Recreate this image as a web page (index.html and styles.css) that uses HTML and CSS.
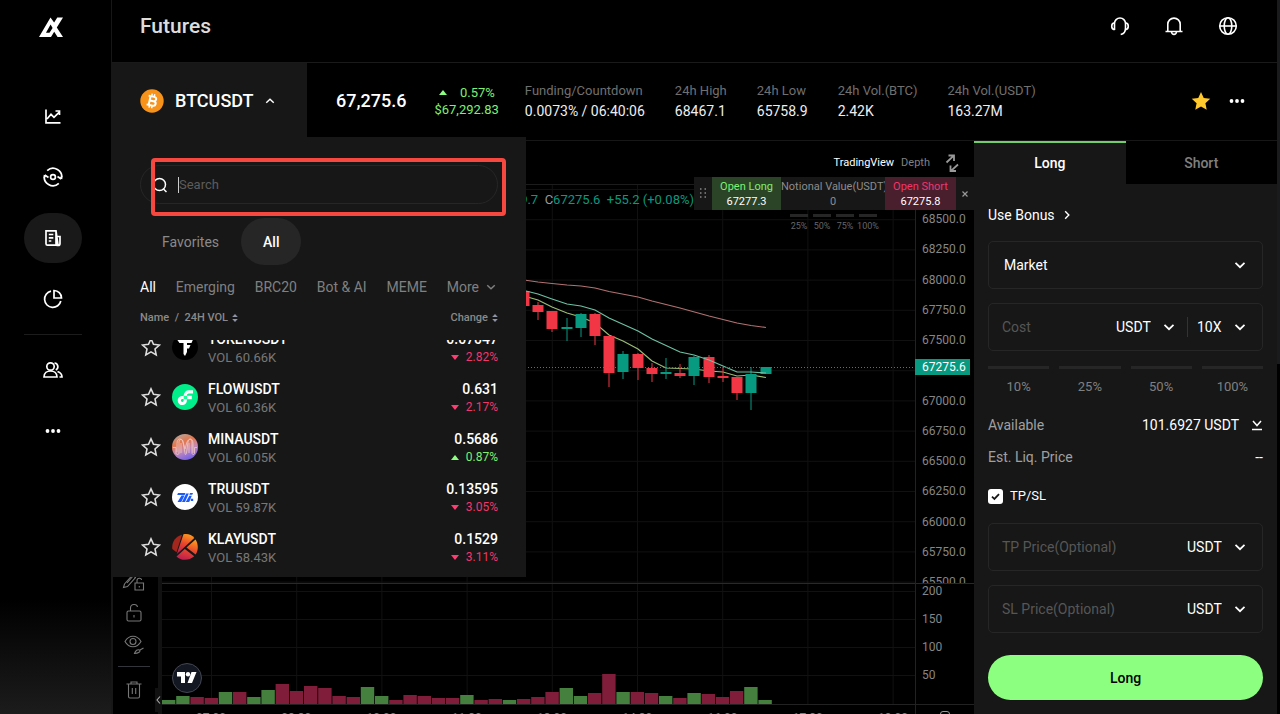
FILE: index.html
```html
<!DOCTYPE html>
<html lang="en">
<head>
    <meta charset="UTF-8">
    <meta name="viewport" content="width=device-width, initial-scale=1.0">
    <title>Futures</title>
    <link rel="stylesheet" href="styles.css">
</head>
<body>
    <svg class="defs" width="0" height="0">
        <symbol id="chevron" viewBox="0 0 12 12"><path d="M1.500 3.800L6 8.200l4.500-4.400" fill="none" stroke="currentColor" stroke-width="1.700"/></symbol>
        <symbol id="star" viewBox="0 0 20 20"><path d="M10 1.800l2.500 5.500 5.900.7-4.400 4 1.200 5.900-5.200-3-5.200 3L6 12 1.600 8l5.900-.7z"/></symbol>
        <symbol id="sort" viewBox="0 0 6 8"><path d="M3 0l2.800 3H.2zM3 8L.2 5h5.600z" fill="#8e93a6"/></symbol>
        <symbol id="dots" viewBox="0 0 16 16"><circle cx="2.500" cy="8" r="1.900"/><circle cx="8" cy="8" r="1.900"/><circle cx="13.500" cy="8" r="1.900"/></symbol>
    </svg>

    <div class="app">
        <aside class="sidebar">
            <a class="logo" href="#" aria-label="Home">
                <svg width="26" height="22" viewBox="0 0 26 22"><path fill="#fff" fill-rule="evenodd" d="M1 21L12.500 1.500l3.600 5L19.300 1.500H25L18.800 11.400 25 21h-5.400l-3.400-5.300L13 21zM12.600 8.600L8 16.800h3.500l3.100-4.700z"/></svg>
            </a>
            <nav class="side-nav">
                <a href="#" aria-label="Markets"><svg viewBox="0 0 20 20"><path d="M3 3.500v13.300h14.500M4 13l4-4.700 3 3 5-5M12.500 5h4v4"/></svg></a>
                <a href="#" aria-label="Copy trading"><svg viewBox="0 0 20 20"><circle cx="10" cy="10" r="2.400"/><path d="M4.200 3.600A8.600 8.600 0 0 1 18.400 12M15.800 16.400A8.600 8.600 0 0 1 1.600 8M14.500 9.500l3 2 1.800-3M5.500 10.500l-3-2-1.800 3"/></svg></a>
                <a class="active" href="#" aria-label="Futures"><svg viewBox="0 0 20 20"><path d="M15 17.200H4.500a1.500 1.500 0 0 1-1.500-1.500V2.800h10zM13 8.500h4v7a1.700 1.700 0 0 1-4 0V3M5.800 6.500h4.500M5.800 9.800h4.500M5.800 13h2.500"/></svg></a>
                <a href="#" aria-label="Assets"><svg viewBox="0 0 20 20"><path d="M8 2.200A8.200 8.200 0 1 0 17.800 12"/><path d="M11 1.500A7.600 7.600 0 0 1 18.500 9H11z"/></svg></a>
                <hr>
                <a href="#" aria-label="Referral"><svg viewBox="0 0 20 20"><circle cx="7.500" cy="6.500" r="3.700"/><path d="M1 17c0-8 13-8 13 0zM11.500 3a3.700 3.700 0 0 1 1.300 7M14.500 11.500c3 1 4.500 2.800 4.500 5.500h-2.500"/></svg></a>
                <a href="#" aria-label="More"><svg class="solid" viewBox="0 0 16 16"><use href="#dots"/></svg></a>
            </nav>
        </aside>

        <main class="main">
            <header class="header">
                <h1>Futures</h1>
                <div class="header-actions">
                    <button type="button" aria-label="Support"><svg viewBox="0 0 20 20"><path d="M4.500 14V7.500a5.500 5.500 0 0 1 11 0V12c0 4-2 6-4.800 6.500M4.500 6.800C.8 7.300.8 13.200 4.500 13.700M15.500 6.800c3.700.5 3.700 6.400 0 6.900"/></svg></button>
                    <button type="button" aria-label="Notifications"><svg viewBox="0 0 20 20"><path d="M3.800 15.200V8.300a6.200 6.200 0 0 1 12.400 0v6.900M1.500 15.500h17M7.500 16c.4 3.200 4.600 3.200 5 0"/></svg></button>
                    <button type="button" aria-label="Language"><svg viewBox="0 0 20 20"><circle cx="10" cy="10" r="8.300"/><ellipse cx="10" cy="10" rx="3.800" ry="8.300"/><path d="M1.700 10h16.600"/></svg></button>
                </div>
            </header>

            <section class="ticker">
                <div class="pair">
                    <button class="pair-btn" type="button">
                        <svg width="24" height="24" viewBox="0 0 24 24"><circle cx="12" cy="12" r="11.700" fill="#f7931a"/><g fill="none" stroke="#fff" stroke-width="2" transform="rotate(13 12 12)"><path d="M7.500 7.500h5.700c3.300 0 3.300 4.400 0 4.400H9.500M9.600 7v10M7.500 16.500h6c3.600 0 3.600-4.600 0-4.600"/><path d="M10.600 4.800v2.500M13.200 4.800v2.500M10.600 16.700v2.500M13.200 16.700v2.500" stroke-width="1.500"/></g></svg>
                        <span>BTCUSDT</span>
                        <svg class="up" width="10" height="10"><use href="#chevron"/></svg>
                    </button>

                    <div class="menu">
                        <label class="search">
                            <svg width="16" height="16" viewBox="0 0 16 16"><circle cx="7.500" cy="7.500" r="6"/><path d="M11.500 12l3 3"/></svg>
                            <i class="caret"></i>
                            <input type="text" placeholder="Search" aria-label="Search">
                        </label>
                        <div class="search-frame"></div>
                        <div class="scope">
                            <button type="button">Favorites</button>
                            <button class="active" type="button">All</button>
                        </div>
                        <div class="cats">
                            <button class="active" type="button">All</button>
                            <button type="button">Emerging</button>
                            <button type="button">BRC20</button>
                            <button type="button">Bot &amp; AI</button>
                            <button type="button">MEME</button>
                            <button type="button">More <svg width="10" height="10"><use href="#chevron"/></svg></button>
                        </div>
                        <div class="list-head">
                            <span>Name&nbsp; /&nbsp; 24H VOL <svg width="6" height="8"><use href="#sort"/></svg></span>
                            <span>Change <svg width="6" height="8"><use href="#sort"/></svg></span>
                        </div>
                        <ul class="coins">
                            <li>
                                <svg class="fav"><use href="#star"/></svg>
                                <svg class="coin" viewBox="0 0 26 26"><circle cx="13" cy="13" r="13" fill="#000"/><path d="M5 5.500h16l-1.500 3.500H15v2h3.500L17 14.500h-2V18l-2 4-1.500-2V9H7.500z" fill="#fff"/></svg>
                                <div class="coin-name"><b>TOKENUSDT</b><span>VOL 60.66K</span></div>
                                <div class="coin-price"><b>0.07047</b><span class="down">2.82%</span></div>
                            </li>
                            <li>
                                <svg class="fav"><use href="#star"/></svg>
                                <svg class="coin" viewBox="0 0 26 26"><circle cx="13" cy="13" r="13" fill="#00ef8b"/><path d="M15.200 11.800h4.600v3.500h-4.600zM11.700 11.800h3.500v3.500h-3.500z" fill="#fff"/><path d="M11.700 13.500H10a3 3 0 1 0 3.300 3v-5.200a3.600 3.600 0 0 1 3.600-3.500H21" fill="none" stroke="#fff" stroke-width="3.200"/><path d="M11.700 11.800h3.500v3.500h-3.500z" fill="#16ff99"/></svg>
                                <div class="coin-name"><b>FLOWUSDT</b><span>VOL 60.36K</span></div>
                                <div class="coin-price"><b>0.631</b><span class="down">2.17%</span></div>
                            </li>
                            <li>
                                <svg class="fav"><use href="#star"/></svg>
                                <svg class="coin" viewBox="0 0 26 26"><defs><linearGradient id="mina" x1=".3" y1="0" x2=".7" y2="1"><stop offset="0" stop-color="#b9a39a"/><stop offset=".3" stop-color="#e4774c"/><stop offset=".6" stop-color="#c58bb5"/><stop offset="1" stop-color="#6a5cf0"/></linearGradient></defs><circle cx="13" cy="13" r="13" fill="url(#mina)"/><path d="M1 13.500h3V19c0 2 3 2 3 0V8c0-3.500 4-3.500 4 0l2 11c0 2 1 2 1.500 0l1.500-11c.5-3.500 4-3.500 4 0v11c0 2 2.500 2 2.500 0v-5.500H25M5 18V9.500C5 4 9.500 3.500 11 8l2 7 2-7c2-4.500 6-4 6 1.500V19M9 9v10M17 9v10" fill="none" stroke="#f3c9c4" stroke-width=".8"/></svg>
                                <div class="coin-name"><b>MINAUSDT</b><span>VOL 60.05K</span></div>
                                <div class="coin-price"><b>0.5686</b><span class="rise">0.87%</span></div>
                            </li>
                            <li>
                                <svg class="fav"><use href="#star"/></svg>
                                <svg class="coin" viewBox="0 0 26 26"><circle cx="13" cy="13" r="13" fill="#fff"/><path d="M6 9h7.500l-.8 2H5.200zM9.500 11.500h3L9.300 18H5.500zM14.200 9.500h2.600L13 18h-3zM18 9h3l-.7 1.800h-3zM17.300 11.800h2.500L17.200 18h-3.400zM18.800 14.800h2.400V17h-2.400z" fill="#1a5aff"/></svg>
                                <div class="coin-name"><b>TRUUSDT</b><span>VOL 59.87K</span></div>
                                <div class="coin-price"><b>0.13595</b><span class="down">3.05%</span></div>
                            </li>
                            <li>
                                <svg class="fav"><use href="#star"/></svg>
                                <svg class="coin" viewBox="0 0 26 26"><defs><linearGradient id="klay" x1=".7" y1="0" x2=".4" y2="1"><stop offset="0" stop-color="#ff9a1f"/><stop offset=".5" stop-color="#e9482b"/><stop offset="1" stop-color="#c01f4f"/></linearGradient></defs><path d="M10 .8l-5.500 17.500L.3 15C-.5 8 3.500 2.500 10 .8z" fill="#a3271c"/><path d="M11.500.3C16-.5 20 1 22.300 4L8.800 16.500l-4 3.500z" fill="url(#klay)"/><path d="M23.500 5.500C26.500 10 26.600 16 23.600 20.500L14.500 13.500zM12.800 15l9.400 7.300C17 27 9 27 4.500 22.500z" fill="url(#klay)"/></svg>
                                <div class="coin-name"><b>KLAYUSDT</b><span>VOL 58.43K</span></div>
                                <div class="coin-price"><b>0.1529</b><span class="down">3.11%</span></div>
                            </li>
                        </ul>
                    </div>
                </div>

                <div class="last">67,275.6</div>
                <div class="change"><span class="rise">0.57%</span><span>$67,292.83</span></div>
                <dl class="stats">
                    <div><dt>Funding/Countdown</dt><dd>0.0073% / 06:40:06</dd></div>
                    <div><dt>24h High</dt><dd>68467.1</dd></div>
                    <div><dt>24h Low</dt><dd>65758.9</dd></div>
                    <div><dt>24h Vol.(BTC)</dt><dd>2.42K</dd></div>
                    <div><dt>24h Vol.(USDT)</dt><dd>163.27M</dd></div>
                </dl>
                <div class="ticker-actions">
                    <button type="button" aria-label="Favorite"><svg width="22" height="22" fill="#ffc82c"><use href="#star"/></svg></button>
                    <button type="button" aria-label="More"><svg width="16" height="16" fill="#fff"><use href="#dots"/></svg></button>
                </div>
            </section>

            <div class="work">
                <section class="chart">
                    <div class="chart-bar">
                        <button class="active" type="button">TradingView</button>
                        <button type="button">Depth</button>
                        <button class="expand" type="button" aria-label="Full screen"><svg width="18" height="18" viewBox="0 0 18 18"><path d="M3.500 8.500L10.500 1.800M5.500 1.500H11V7M15 10.500L8 16.800M7.500 11.500V17H13"/></svg></button>
                    </div>
                    <div class="chart-body">
                        <div class="tools">
                            <button type="button" aria-label="Lock drawings"><svg viewBox="0 0 24 24"><path d="M2.500 14l8-9 3 2.500-8 9-4 1zM5 13l7-8M13 13h8.500v7H13zM15 13v-2.500c0-3 4.500-3 4.500-.5M17.300 16v1.500"/></svg></button>
                            <button type="button" aria-label="Unlock"><svg viewBox="0 0 24 24"><rect x="5" y="10" width="14" height="10" rx="1.500"/><path d="M8.500 10V7c0-4.500 6.500-4.500 7-1M12 14v2.500"/></svg></button>
                            <button type="button" aria-label="Hide drawings"><svg viewBox="0 0 24 24"><path d="M3 9.500c4-7 12-7 16 0-4 7-12 7-16 0z"/><circle cx="11" cy="9.500" r="3"/><path d="M12.500 21.500c1-3 3-4.500 5-3.500 1.500 1.500-1 3.500-5 3.500zM18 18l3.500-2"/></svg></button>
                            <hr>
                            <button type="button" aria-label="Remove drawings"><svg viewBox="0 0 24 24"><path d="M4.500 6h15M6.500 6v12.500a1.500 1.500 0 0 0 1.500 1.500h8a1.500 1.500 0 0 0 1.500-1.500V6M9 6V4h6v2M10.300 10v6M13.700 10v6"/></svg></button>
                            <button class="collapse" type="button" aria-label="Hide toolbar"><svg viewBox="0 0 6 10"><path d="M5 1.500L2 5l3 3.500"/></svg></button>
                        </div>
                        <div class="plot">
                            <svg id="plot" viewBox="162 184 753 520" preserveAspectRatio="none"></svg>
                            <div class="times"><span>07:00</span><span>08:30</span><span>10:00</span><span>11:30</span><span>13:00</span><span>14:30</span><span>16:00</span><span>17:30</span><span>19:00</span></div>
                            <a class="tv" href="#" aria-label="Chart provider"><svg width="20" height="12" viewBox="0 0 20 12"><path fill="#fff" d="M0 0h8v11H4V4.500H0zM14.500 0H19.500L15 11h-4.500z"/><circle cx="11" cy="2.200" r="2.200" fill="#fff"/></svg></a>
                        </div>
                        <div class="axis">
                            <div class="prices">
                                <div class="price-list">
                                    <span>68500.0</span><span>68250.0</span><span>68000.0</span><span>67750.0</span><span>67500.0</span><span>67250.0</span><span>67000.0</span><span>66750.0</span><span>66500.0</span><span>66250.0</span><span>66000.0</span><span>65750.0</span><span>65500.0</span>
                                </div>
                            </div>
                            <div class="volumes"><span>200</span><span>150</span><span>100</span><span>50</span></div>
                            <div class="axis-foot"><i></i></div>
                            <div class="price-tag">67275.6</div>
                        </div>
                    </div>

                    <div class="legend">9.7 &nbsp;<span>C</span>67275.6 &nbsp;+55.2 (+0.08%)</div>

                    <div class="quick">
                        <div class="quick-row">
                            <svg class="grip" viewBox="0 0 8 10"><path d="M1 1h1.500M5.500 1H7M1 5h1.500M5.500 5H7M1 9h1.500M5.500 9H7"/></svg>
                            <button class="open-long" type="button">Open Long<b>67277.3</b></button>
                            <label class="notional">Notional Value(USDT)<input type="text" value="0"></label>
                            <button class="open-short" type="button">Open Short<b>67275.8</b></button>
                            <button class="close" type="button" aria-label="Close"><svg viewBox="0 0 6 6"><path d="M.5.5l5 5M5.500.5l-5 5"/></svg></button>
                        </div>
                        <div class="quick-pct"><button type="button">25%</button><button type="button">50%</button><button type="button">75%</button><button type="button">100%</button></div>
                    </div>
                </section>

                <section class="order">
                    <div class="sides">
                        <button class="active" type="button">Long</button>
                        <button type="button">Short</button>
                    </div>
                    <form class="order-form">
                        <a class="bonus" href="#">Use Bonus <svg width="10" height="10"><use href="#chevron"/></svg></a>

                        <div class="field">
                            <div class="pick wide"><select aria-label="Order type"><option>Market</option></select><svg><use href="#chevron"/></svg></div>
                        </div>
                        <div class="field">
                            <input type="text" placeholder="Cost" aria-label="Cost">
                            <div class="pick"><select aria-label="Cost unit"><option>USDT</option></select><svg><use href="#chevron"/></svg></div>
                            <div class="pick lever"><select aria-label="Leverage"><option>10X</option></select><svg><use href="#chevron"/></svg></div>
                        </div>
                        <div class="percents"><button type="button">10%</button><button type="button">25%</button><button type="button">50%</button><button type="button">100%</button></div>

                        <div class="line"><span>Available</span><strong>101.6927 USDT <svg width="12" height="12" viewBox="0 0 12 12"><path d="M2 2l4 4.500L10 2M1 10.500h10"/></svg></strong></div>
                        <div class="line"><span>Est. Liq. Price</span><strong>--</strong></div>

                        <label class="tpsl"><input type="checkbox" checked><svg viewBox="0 0 10 10"><path d="M1.800 5.200l2.200 2 4.200-4.400"/></svg>TP/SL</label>

                        <div class="field">
                            <input type="text" placeholder="TP Price(Optional)" aria-label="TP Price">
                            <div class="pick"><select aria-label="TP unit"><option>USDT</option></select><svg><use href="#chevron"/></svg></div>
                        </div>
                        <div class="field">
                            <input type="text" placeholder="SL Price(Optional)" aria-label="SL Price">
                            <div class="pick"><select aria-label="SL unit"><option>USDT</option></select><svg><use href="#chevron"/></svg></div>
                        </div>
                        <button class="submit" type="submit">Long</button>
                    </form>
                </section>
            </div>
        </main>
        <div class="scrollbar"></div>
    </div>

    <script src="chart.js"></script>
</body>
</html>
```
FILE: styles.css
```css
* { margin: 0; padding: 0; box-sizing: border-box; }
body { background: #000; color: #fff; font: 14px/20px Roboto, sans-serif; }
button, input, select { font: inherit; color: inherit; background: none; border: none; outline: none; }
button, select { cursor: pointer; }
a { color: inherit; text-decoration: none; }
ul { list-style: none; }
svg { display: block; flex-shrink: 0; }
.defs { position: absolute; }

.app { display: flex; height: 100vh; overflow: hidden; }
.main { flex: 1; min-width: 0; display: flex; flex-direction: column; }
.scrollbar { width: 3px; height: 51%; background: #1a1b1c; }

/* sidebar */
.sidebar { width: 112px; flex-shrink: 0; border-right: 1px solid #171717; background: linear-gradient(#000 84%, #1c1c1c); }
.logo { display: flex; justify-content: center; padding: 16px 10px 0 0; height: 91px; }
.side-nav { display: flex; flex-direction: column; align-items: center; gap: 11px; padding-right: 6px; }
.side-nav a { width: 58px; height: 50px; border-radius: 25px; display: grid; place-items: center; }
.side-nav a.active { background: #191919; }
.side-nav svg { width: 20px; height: 20px; fill: none; stroke: #fff; stroke-width: 1.7; }
.side-nav svg.solid { width: 16px; height: 16px; fill: #fff; stroke: none; }
.side-nav hr { width: 58px; height: 1px; margin: -1px 0; border: none; background: #1c1c1c; }

/* header */
.header { height: 63px; flex-shrink: 0; display: flex; justify-content: space-between; align-items: center; padding: 0 39px 10px 28px; border-bottom: 1px solid #1a1a1a; }
h1 { font-size: 21px; font-weight: 500; color: #dcdcdc; }
.header-actions { display: flex; gap: 34px; }
.header-actions svg { width: 20px; height: 20px; fill: none; stroke: #fff; stroke-width: 1.6; }

/* ticker */
.ticker { height: 78px; flex-shrink: 0; display: flex; align-items: center; padding-bottom: 2px; border-bottom: 1px solid #171717; }
.pair { position: relative; align-self: flex-start; width: 195px; height: 74px; background: #171717; }
.pair-btn { display: flex; align-items: center; height: 76px; padding-left: 28px; gap: 11px; font-size: 18px; font-weight: 500; }
.up { transform: rotate(180deg); }
.last { margin-left: 29px; font-size: 18px; font-weight: 500; }
.change { margin-left: 28px; display: flex; flex-direction: column; align-items: flex-end; font-size: 13px; line-height: 17px; color: #7ef071; }
.change .rise { padding-right: 4px; gap: 13px; }
.stats { display: flex; gap: 30px; margin-left: 26px; }
.stats dt { font-size: 13px; color: #707070; }
.stats dd { color: #eee; }
.ticker-actions { margin-left: auto; display: flex; align-items: center; gap: 17px; padding-right: 32px; }

.rise, .down { display: flex; align-items: center; gap: 7px; }
.rise { color: #7ef071; }
.down { color: #f0366b; }
.rise::before, .down::before { content: ""; border: 4px solid transparent; border-top-width: 0; border-bottom: 5px solid #8dff80; }
.down::before { border-top: 5px solid #ff3d74; border-bottom-width: 0; }

/* pair menu */
.menu { position: absolute; z-index: 5; top: 100%; left: 0; width: 414px; height: 440px; padding: 28px 28px 0; display: flex; flex-direction: column; background: #171717; }
.search { display: flex; align-items: center; height: 39px; padding-left: 11px; border: 1px solid #262626; border-radius: 20px; }
.search svg { fill: none; stroke: #fff; stroke-width: 1.5; }
.search .caret { width: 1px; height: 16px; margin-left: 10px; background: #ccc; }
.search input { flex: 1; font-size: 13px; }
.search input::placeholder { color: #5c5c5c; opacity: 1; }
.search-frame { position: absolute; top: 21px; left: 39px; width: 355px; height: 58px; border: 4px solid #f7483f; border-radius: 4px; }
.scope { display: flex; margin-top: 14px; }
.scope button { height: 47px; padding: 0 22px; border-radius: 24px; color: #8a8a8a; }
.scope .active { background: #262626; color: #fff; font-weight: 500; }
.cats { display: flex; justify-content: space-between; margin-top: 12px; padding-right: 2px; }
.cats button { display: flex; align-items: center; gap: 7px; color: #808080; }
.cats .active { color: #fff; }
.list-head { display: flex; justify-content: space-between; margin-top: 11px; font-size: 11px; font-weight: 500; color: #8a8a8a; }
.list-head span { display: flex; align-items: center; gap: 4px; }
.coins { flex: 1; min-height: 0; margin-top: 12px; padding-bottom: 5px; display: flex; flex-direction: column; justify-content: flex-end; overflow: hidden; }
.coins li { flex-shrink: 0; display: flex; align-items: center; height: 50px; padding-left: 1px; }
.fav { width: 20px; height: 20px; fill: none; stroke: #ddd; stroke-width: 1.6; }
.coin { width: 26px; height: 26px; margin: 0 10px 0 11px; }
.coins b { display: block; font-weight: 500; }
.coins span { line-height: 17px; }
.coin-name span { display: block; color: #787878; font-size: 13px; }
.coin-price { margin-left: auto; display: flex; flex-direction: column; align-items: flex-end; }
.coin-price span { font-size: 12px; }

/* chart */
.work { flex: 1; min-height: 0; display: flex; }
.chart { position: relative; flex: 1; min-width: 0; display: flex; flex-direction: column; }
.chart-bar { height: 43px; flex-shrink: 0; display: flex; justify-content: flex-end; align-items: center; gap: 7px; padding-right: 13px; font-size: 11px; }
.chart-bar button { color: #808080; }
.chart-bar .active { color: #fff; }
.expand { margin-left: 6px; }
.expand svg { fill: none; stroke: #999; stroke-width: 1.8; }
.chart-body { flex: 1; min-height: 0; display: flex; }
.tools { position: relative; width: 50px; padding: 0 3px 9px 0; border-left: 1px solid #171717; border-right: 4px solid #111; display: flex; flex-direction: column; align-items: center; justify-content: flex-end; gap: 1px; }
.tools svg { width: 24px; height: 24px; margin: 3px; fill: none; stroke: #777; stroke-width: 1.1; }
.tools hr { width: 32px; margin: 6px 0 7px; border: none; border-top: 1px solid #33343c; }
.tools .collapse { position: absolute; right: -3px; bottom: 2px; width: 6px; height: 24px; background: #111; }
.tools .collapse svg { width: 6px; height: 10px; margin: 0; stroke: #aaa; }
.plot { position: relative; flex: 1; min-width: 0; }
.plot > svg { width: 100%; height: 520px; }
.times { display: flex; justify-content: space-between; padding: 4px 7px 4px 34px; border-top: 1px solid #222; font-size: 12px; line-height: 18px; color: #808080; }
.tv { position: absolute; left: 10px; top: 479px; width: 30px; height: 30px; display: grid; place-items: center; border: 1px solid #434651; border-radius: 50%; background: #131722; }
.axis { position: relative; width: 59px; border-left: 1px solid #222; font-size: 12px; line-height: 14px; color: #868686; }
.prices { height: 400px; overflow: hidden; padding: 28px 0 0 6px; border-bottom: 1px solid #262833; }
.price-list { height: 377px; display: flex; flex-direction: column; justify-content: space-between; }
.volumes { height: 120px; padding-left: 6px; display: flex; flex-direction: column; gap: 14px; }
.axis-foot { border-top: 1px solid #222; padding: 6px 0 0 24px; }
.axis-foot i { display: block; width: 10px; height: 10px; border: 1px solid #999; border-radius: 3px; }
.price-tag { position: absolute; left: -1px; top: 175px; width: 55px; padding: 1px 7px; background: #089981; color: #fff; }
.legend { position: absolute; right: 280px; top: 50px; font-size: 13px; line-height: 18px; white-space: nowrap; color: #089981; }
.legend span { color: #999; }

/* quick order strip */
.quick { position: absolute; right: 0; top: 36px; font-size: 11px; line-height: 15px; }
.quick-row { display: flex; height: 33px; background: #171717; }
.quick b { display: block; font-weight: 400; color: #fff; }
.grip { width: 8px; height: 10px; margin: 11px 5px; stroke: #888; stroke-width: 1.5; }
.open-long { width: 69px; background: #2b4428; color: #7ef071; }
.open-short { width: 71px; background: #4a1f2d; color: #f0366b; }
.notional { width: 104px; color: #8c8c8c; text-align: center; padding-top: 2px; white-space: nowrap; }
.notional input { display: block; width: 100%; text-align: center; }
.close { width: 18px; padding-left: 6px; }
.close svg { width: 6px; height: 6px; stroke: #999; stroke-width: 1.2; }
.quick-pct { display: flex; gap: 5px; padding: 4px 0 0 96px; font-size: 9px; color: #666; }
.quick-pct button { width: 18px; padding-top: 2px; border-top: 3px solid #262626; display: flex; justify-content: center; }

/* order panel */
.order { width: 303px; flex-shrink: 0; background: #171717; }
.sides { display: flex; height: 43px; }
.sides button { flex: 1; border-top: 1px solid #000; background: #000; color: #808080; font-weight: 500; }
.sides .active { padding-bottom: 2px; border-top: 2px solid #74cd6c; background: #171717; color: #fff; }
.order-form { display: flex; flex-direction: column; padding: 21px 14px 14px; }
.bonus { display: flex; align-items: center; gap: 7px; margin-bottom: 16px; }
.bonus svg { transform: rotate(-90deg); }
.field { display: flex; align-items: center; height: 48px; margin-bottom: 14px; padding: 0 16px 0 13px; border: 1px solid #262626; border-radius: 5px; }
.field input { flex: 1; width: 80px; min-width: 0; }
.field input::placeholder { color: #565656; opacity: 1; }
.pick { display: grid; align-items: center; }
.pick select, .pick svg { grid-area: 1 / 1; }
.pick select { appearance: none; width: 100%; padding-right: 24px; }
.pick svg { justify-self: end; width: 12px; height: 12px; pointer-events: none; }
.pick.wide { flex: 1; padding-left: 2px; }
.lever { margin-left: 12px; padding-left: 9px; border-left: 1px solid #333; }
.percents { display: flex; gap: 10px; margin: 1px 0 18px; }
.percents button { flex: 1; padding-top: 8px; border-top: 3px solid #262626; font-size: 13px; color: #808080; }
.line { display: flex; justify-content: space-between; margin-bottom: 12px; color: #a0a0a0; }
.line strong { display: flex; align-items: center; gap: 12px; font-weight: 400; color: #fff; }
.line svg { fill: none; stroke: #fff; stroke-width: 1.5; }
.tpsl { position: relative; display: flex; align-items: center; gap: 7px; margin: 7px 0 17px; font-size: 13px; }
.tpsl input { appearance: none; width: 15px; height: 15px; border-radius: 3px; background: #fff; }
.tpsl svg { position: absolute; left: 2px; width: 11px; height: 11px; fill: none; stroke: #171717; stroke-width: 1.6; }
.submit { height: 45px; margin-top: 8px; border-radius: 23px; background: #8dff80; color: #000; font-weight: 500; }
```
FILE: chart.js
```js
const UP = '#089981';
const DOWN = '#f23645';
const STEP = 14.2;
const BASE = 704;

// x, open/close top, bottom, wick top, wick bottom, rising
const candles = [
    [524, 291, 306, 291, 306, 0], [538, 305, 312, 302, 320, 0], [552, 311, 329, 311, 332, 0],
    [567, 327, 329, 318, 341, 1], [581, 314, 328, 313, 337, 1], [595, 314, 336, 313, 345, 0],
    [609, 336, 373, 336, 387, 0], [623, 354, 372, 351, 379, 1], [638, 354, 368, 353, 380, 0],
    [652, 368, 374, 363, 382, 0], [666, 372, 374, 358, 379, 1], [680, 373, 376, 364, 378, 0],
    [694, 357, 376, 356, 385, 1], [709, 357, 377, 355, 383, 0], [723, 376, 378, 367, 382, 0],
    [737, 377, 393, 377, 400, 0], [751, 374, 393, 367, 410, 1], [766, 367, 374, 367, 374, 1]
];

const volumes = '4g 8g 7r 6r 12g 12r 7g 14g 20r 13r 18r 16r 8r 7r 17g 8g 4r 9r 8r 6r 6r 9g 4r 5r 4g 5r 7r 12r 16g 8g 11r 30r 12g 12r 11r 8g 6r 11g 10r 7r 13r 17g 4g'.split(' ');

const averages = [
    ['#b17171', '524,280 538,282 552,283.500 567,285 581,286 595,288 609,291.500 638,297 652,301 680,308 709,316 737,323 751,325.500 766,327.500'],
    ['#6cc0a4', '524,290.500 538,294 552,299 567,304 581,306 595,310 609,318 638,331 652,339 680,352 694,355 709,360 723,366 737,372 751,372 766,373'],
    ['#9bbd75', '524,296 538,300 552,307 567,313 581,317 595,323 609,335 623,341 638,349 652,361 666,368 694,369 709,371 723,372 737,376 751,375 766,377.500']
];

let out = '';
const line = (x1, y1, x2, y2, color, extra = '') => {
    out += `<line x1="${x1}" y1="${y1}" x2="${x2}" y2="${y2}" stroke="${color}" ${extra}/>`;
};

for (let i = 0; i < 9; i++) line(211.5 + i * 85.2, 184, 211.5 + i * 85.2, BASE, '#111');
for (let i = 0; i < 14; i++) line(162, 189.5 + i * 30.2, 915, 189.5 + i * 30.2, '#111');
[591.5, 619.5, 647.5, 675.5].forEach(y => line(162, y, 915, y, '#111'));
line(162, 184.5, 915, 184.5, '#1c1c1c');
line(162, 583.5, 915, 583.5, '#262833');

volumes.forEach((v, i) => {
    const h = parseInt(v);
    const color = v.endsWith('g') ? '#45803f' : '#801d3a';
    out += `<rect x="${162 + i * STEP}" y="${BASE - h}" width="13.400" height="${h}" fill="${color}"/>`;
});

averages.forEach(([color, points], i) => {
    if (i !== 1) out += `<polyline points="${points}" fill="none" stroke="${color}" stroke-width="1.200"/>`;
});
candles.forEach(([x, top, bottom, high, low, up]) => {
    const color = up ? UP : DOWN;
    line(x, high, x, low, color);
    out += `<rect x="${x - 5.5}" y="${top}" width="11" height="${bottom - top}" fill="${color}"/>`;
});
out += `<polyline points="${averages[1][1]}" fill="none" stroke="${averages[1][0]}" stroke-width="1.200"/>`;
line(162, 367.5, 915, 367.5, UP, 'stroke-dasharray="1 2"');

document.getElementById('plot').innerHTML = out;
```
